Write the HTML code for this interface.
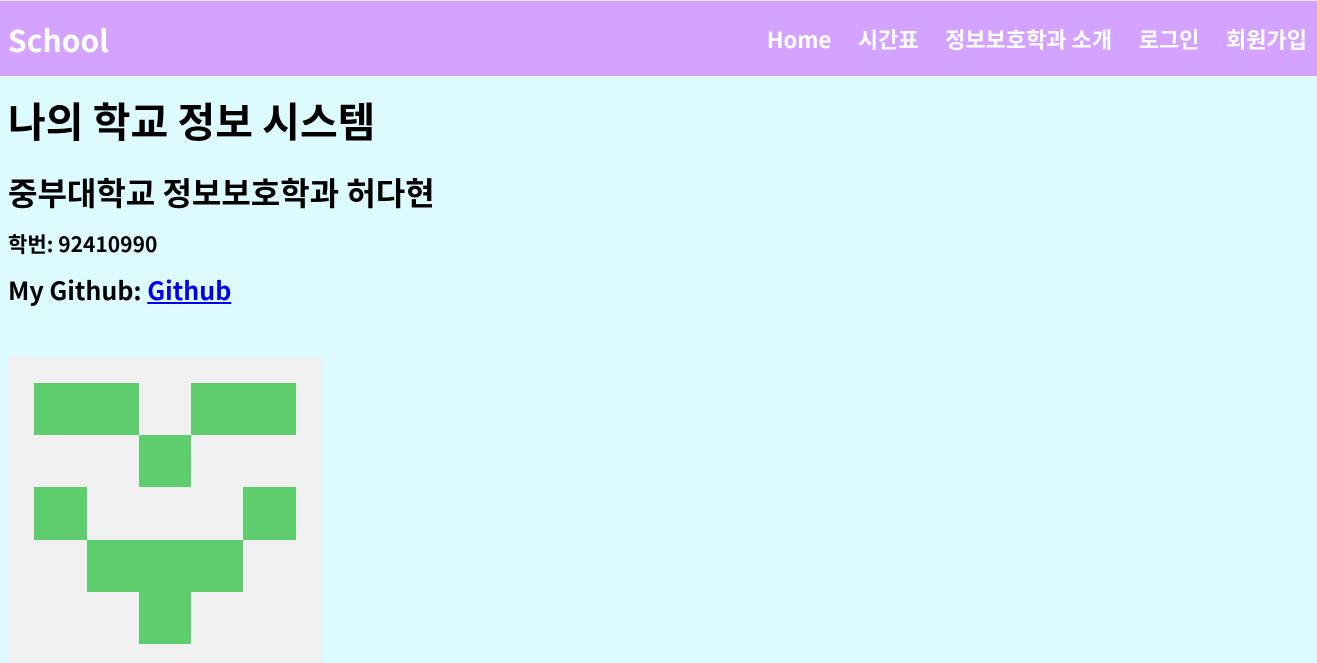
<!DOCTYPE html>
<html><head><meta charset="utf-8"><style>
*{margin:0;padding:0;box-sizing:border-box}
html,body{width:1317px;height:663px;overflow:hidden}
body{background:#ddfbff;font-family:"Noto Sans CJK KR","Liberation Sans",sans-serif;border-top:1px solid #e8e8e8;position:relative}
.nav{height:75px;background:#d4a3ff;display:flex;align-items:center;justify-content:space-between;padding:0 10px 0 8px;color:#fff;font-weight:bold}
.logo{font-size:30px}
.links a{color:#fff;text-decoration:none;font-size:22px;margin-left:26.6px}
h1{position:absolute;left:8px;top:93px;font-size:41px;line-height:50px}
h2{position:absolute;left:8px;top:169px;font-size:32px;line-height:44px}
.id{position:absolute;left:8px;top:228px;font-size:21px;font-weight:bold;line-height:30px}
.gh{position:absolute;left:8px;top:272px;font-size:25px;font-weight:bold;line-height:34px}
.gh a{color:#0000ee}
.ic{position:absolute;left:8px;top:356px;width:314px;height:314px;background:#f0f0f0}
.ic div{position:absolute;background:#5ecd6e}
</style></head><body>
<div class="nav"><div class="logo">School</div><div class="links"><a>Home</a><a>시간표</a><a>정보보호학과 소개</a><a>로그인</a><a>회원가입</a></div></div>
<h1>나의 학교 정보 시스템</h1>
<h2>중부대학교 정보보호학과 허다현</h2>
<div class="id">학번: 92410990</div>
<div class="gh">My Github: <a href="#">Github</a></div>
<div class="ic">
<div style="left:26px;top:26px;width:105px;height:52px"></div>
<div style="left:183px;top:26px;width:105px;height:52px"></div>
<div style="left:131px;top:78px;width:52px;height:52px"></div>
<div style="left:26px;top:130px;width:53px;height:53px"></div>
<div style="left:235px;top:130px;width:53px;height:53px"></div>
<div style="left:79px;top:183px;width:156px;height:52px"></div>
<div style="left:131px;top:235px;width:52px;height:52px"></div>
</div>
</body></html>
